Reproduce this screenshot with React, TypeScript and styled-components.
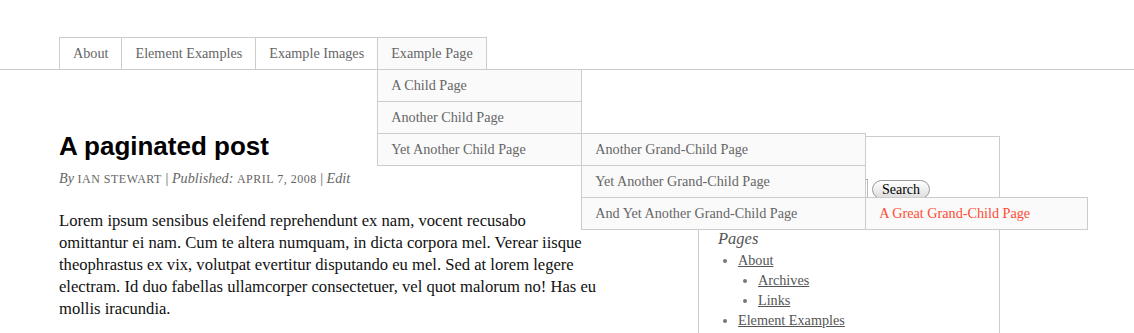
import { FC } from 'react';

import styled, { createGlobalStyle } from 'styled-components';

const serif = `Georgia, 'Liberation Serif', 'DejaVu Serif', serif`;

type MenuNode = { label: string; active?: boolean; children?: MenuNode[] };

const menu: MenuNode[] = [
  { label: 'About' },
  { label: 'Element Examples' },
  { label: 'Example Images' },
  {
    label: 'Example Page',
    active: true,
    children: [
      { label: 'A Child Page' },
      { label: 'Another Child Page' },
      {
        label: 'Yet Another Child Page',
        children: [
          { label: 'Another Grand-Child Page' },
          { label: 'Yet Another Grand-Child Page' },
          {
            label: 'And Yet Another Grand-Child Page',
            children: [{ label: 'A Great Grand-Child Page', active: true }],
          },
        ],
      },
    ],
  },
];

// dropdown widths per depth
const subWidths = [205, 285, 223];

const SubMenu: FC<{ items: MenuNode[]; depth: number }> = ({ items, depth }) => (
  <Drop $depth={depth} $width={subWidths[depth]}>
    {items.map((item) => (
      <DropItem key={item.label}>
        <DropLink href='#' $active={item.active}>
          {item.label}
        </DropLink>
        {item.children && <SubMenu items={item.children} depth={depth + 1} />}
      </DropItem>
    ))}
  </Drop>
);

const App: FC = () => {
  return (
    <>
      <GlobalStyle />
      <Header>
        <Nav>
          <Tabs>
            {menu.map((item) => (
              <Tab key={item.label}>
                <TabLink href='#' $active={item.active}>
                  {item.label}
                </TabLink>
                {item.children && <SubMenu items={item.children} depth={0} />}
              </Tab>
            ))}
          </Tabs>
        </Nav>
      </Header>
      <Main>
        <Content>
          <PostTitle>A paginated post</PostTitle>
          <Meta>
            <em>By</em> <Caps>Ian Stewart</Caps> <Sep>|</Sep> <em>Published:</em>{' '}
            <Caps>April 7, 2008</Caps> <Sep>|</Sep> <em>Edit</em>
          </Meta>
          <Body>
            Lorem ipsum sensibus eleifend reprehendunt ex nam, vocent recusabo omittantur ei nam.
            Cum te altera numquam, in dicta corpora mel. Verear iisque theophrastus ex vix,
            volutpat evertitur disputando eu mel. Sed at lorem legere electram. Id duo fabellas
            ullamcorper consectetuer, vel quot malorum no! Has eu mollis iracundia.
          </Body>
        </Content>
        <Sidebar>
          <SearchRow>
            <SearchInput type='text' />
            <SearchButton type='button'>Search</SearchButton>
          </SearchRow>
          <WidgetTitle>Pages</WidgetTitle>
          <PageList>
            <li>
              <PageLink href='#'>About</PageLink>
              <PageList>
                <li>
                  <PageLink href='#'>Archives</PageLink>
                </li>
                <li>
                  <PageLink href='#'>Links</PageLink>
                </li>
              </PageList>
            </li>
            <li>
              <PageLink href='#'>Element Examples</PageLink>
            </li>
          </PageList>
        </Sidebar>
      </Main>
    </>
  );
};

const GlobalStyle = createGlobalStyle`
  body {
    margin: 0;
    background: #fff;
    color: #111;
    font-family: ${serif};
    overflow: hidden;
  }
`;

const Header = styled.header`
  padding-top: 37px;
`;

const Nav = styled.nav`
  border-bottom: 1px solid #ccc;
  position: relative;
  z-index: 10;
`;

const Tabs = styled.ul`
  display: flex;
  list-style: none;
  margin: 0 0 0 59px;
  padding: 0;
`;

const Tab = styled.li`
  position: relative;
  margin-right: -1px;
`;

const TabLink = styled.a<{ $active?: boolean }>`
  display: block;
  height: 31px;
  line-height: 31px;
  padding: 0 13px;
  border: 1px solid #ccc;
  border-bottom: none;
  background: ${(p) => (p.$active ? '#fafafa' : '#fff')};
  color: #666;
  font-size: 14.2px;
  text-decoration: none;
`;

const Drop = styled.ul<{ $depth: number; $width: number }>`
  position: absolute;
  list-style: none;
  margin: 0;
  padding: 0;
  width: ${(p) => p.$width}px;
  top: ${(p) => (p.$depth === 0 ? '100%' : '0')};
  left: ${(p) => (p.$depth === 0 ? '0' : '100%')};
  margin-left: ${(p) => (p.$depth === 0 ? '0' : '-1px')};
`;

const DropItem = styled.li`
  position: relative;
  margin-bottom: -1px;
`;

const DropLink = styled.a<{ $active?: boolean }>`
  display: block;
  height: 31px;
  line-height: 31px;
  padding: 0 13px;
  border: 1px solid #ccc;
  background: #fafafa;
  color: ${(p) => (p.$active ? '#ff4b33' : '#666')};
  font-size: 14.2px;
  text-decoration: none;
  white-space: nowrap;
`;

const Main = styled.main`
  display: flex;
  align-items: flex-start;
  margin-left: 59px;
`;

const Content = styled.article`
  width: 539px;
  flex-shrink: 0;
  padding-top: 60px;
`;

const PostTitle = styled.h1`
  margin: 0;
  font-family: 'Liberation Sans', Arial, sans-serif;
  font-size: 26px;
  line-height: 32px;
  font-weight: bold;
  color: #000;
`;

const Meta = styled.div`
  margin-top: 7px;
  font-size: 14.2px;
  line-height: 18px;
  color: #666;
`;

const Caps = styled.span`
  text-transform: uppercase;
  font-size: 12px;
  letter-spacing: 0.5px;
`;

const Sep = styled.span`
  color: #666;
`;

const Body = styled.p`
  margin: 22px 0 0;
  font-size: 16.6px;
  line-height: 22px;
  color: #111;
`;

const Sidebar = styled.aside`
  margin-left: 100px;
  margin-top: 66px;
  width: 302px;
  height: 260px;
  flex-shrink: 0;
  border: 1px solid #ccc;
  padding: 42px 0 0 19px;
  box-sizing: border-box;
`;

const SearchRow = styled.div`
  display: flex;
  align-items: center;
  gap: 4px;
`;

const SearchInput = styled.input`
  width: 150px;
  height: 20px;
  box-sizing: border-box;
  border: 1px solid #999;
  border-right-color: #bbb;
`;

const SearchButton = styled.button`
  width: 58px;
  height: 19px;
  padding: 0;
  border: 1px solid #999;
  border-radius: 10px;
  background: linear-gradient(#fff, #ddd);
  font-family: 'Liberation Serif', serif;
  font-size: 14px;
  color: #000;
  line-height: 17px;
`;

const WidgetTitle = styled.h3`
  margin: 30px 0 0;
  font-size: 16.5px;
  font-style: italic;
  font-weight: normal;
  color: #555;
  line-height: 20px;
`;

const PageList = styled.ul`
  margin: 1px 0 0;
  padding-left: 20px;
  font-size: 14.2px;
  line-height: 20px;
  color: #777;

  & & {
    margin: 0;
    list-style: disc;
  }
`;

const PageLink = styled.a`
  color: #555;
  text-decoration: underline;
`;

export default App;
